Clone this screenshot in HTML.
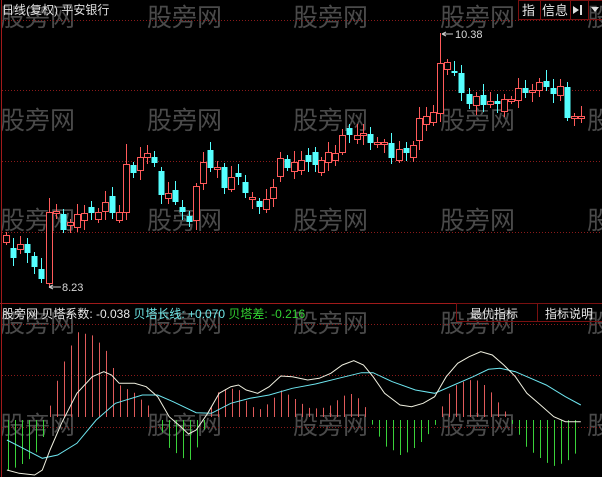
<!DOCTYPE html>
<html><head><meta charset="utf-8"><style>
html,body{margin:0;padding:0;background:#000;}
body{width:602px;height:477px;overflow:hidden;position:relative;font-family:"Liberation Sans","Noto Sans CJK SC",sans-serif;}
svg{position:absolute;left:0;top:0;}
.t{font-family:"Liberation Sans","Noto Sans CJK SC",sans-serif;}
</style></head><body>
<svg id="s" width="602" height="477" viewBox="0 0 602 477">
<g fill="#4a4a4a" font-size="25" class="t" id="wm"></g>
<g stroke="#8a1a1a" stroke-dasharray="1,2" stroke-width="1">
<line x1="2" y1="20.5" x2="602" y2="20.5"/>
<line x1="2" y1="90.5" x2="602" y2="90.5"/>
<line x1="2" y1="161.5" x2="602" y2="161.5"/>
<line x1="2" y1="232.5" x2="602" y2="232.5"/>
<line x1="2" y1="324.5" x2="602" y2="324.5"/>
<line x1="2" y1="375.5" x2="602" y2="375.5"/>
<line x1="2" y1="427.5" x2="602" y2="427.5"/>
</g>
<line x1="1.5" y1="0" x2="1.5" y2="477" stroke="#a01a1a"/>
<line x1="0" y1="303.5" x2="602" y2="303.5" stroke="#a01a1a"/>
<g id="c"></g>
<g id="h"></g>
<g id="l" fill="none"></g>
<text x="2" y="14" fill="#e0e0e0" font-size="12" class="t">日线(复权) 平安银行</text>
<g stroke="#7a1010" fill="none">
<rect x="518.5" y="0.5" width="22" height="19"/>
<rect x="540.5" y="0.5" width="30" height="19"/>
<rect x="570.5" y="0.5" width="18" height="19"/>
<rect x="588.5" y="0.5" width="14" height="19"/>
<rect x="456.5" y="303.5" width="81" height="18"/>
<rect x="537.5" y="303.5" width="66" height="18"/>
</g>
<text x="522" y="15" fill="#e8e8e8" font-size="13" class="t">指</text>
<text x="542" y="15" fill="#e8e8e8" font-size="13" class="t">信息</text>
<path d="M573 6 L579 10 L573 14 Z" fill="#ddd"/><rect x="573" y="9" width="2" height="2" fill="#ddd"/><rect x="580" y="5" width="2" height="10" fill="#ddd"/>
<path d="M591 7 L599 7 L595 12 Z" fill="#ddd"/>
<text x="470" y="318" fill="#e8e8e8" font-size="12" class="t">最优指标</text>
<text x="545" y="318" fill="#e8e8e8" font-size="12" class="t">指标说明</text>
<text x="2" y="318" font-size="12" class="t"><tspan fill="#e8e8e8">股旁网 贝塔系数: -0.038 </tspan><tspan fill="#6ee6e6">贝塔长线: +0.070 </tspan><tspan fill="#32d232">贝塔差: -0.216</tspan></text>
<line x1="442" y1="34" x2="453" y2="34" stroke="#ccc"/><path d="M442 34 L446 32 M442 34 L446 36" stroke="#ccc"/>
<text x="455" y="38" fill="#d8d8d8" font-size="11" class="t">10.38</text>
<line x1="49" y1="287" x2="61" y2="287" stroke="#ccc"/><path d="M49 287 L53 285 M49 287 L53 289" stroke="#ccc"/>
<text x="62" y="291" fill="#d8d8d8" font-size="11" class="t">8.23</text>
</svg>
<script>
var NS="http://www.w3.org/2000/svg";
function el(p,n,a){var e=document.createElementNS(NS,n);for(var k in a)e.setAttribute(k,a[k]);p.appendChild(e);return e;}
var wm=document.getElementById('wm');
[12,115,215,318,420].forEach(function(y){[0,147,293,440,587].forEach(function(x){var t=el(wm,'text',{x:x,y:y+14});t.textContent='股旁网';});});
// x, top, bottom, up(red)
var C=[[6,235,242,1],[13,248,258,0],[20,244,249,1],[27,244,253,0],[34,256,267,0],[41,269,279,0],[49,212,283,1],[56,211,213,1],[63,214,230,0],[70,222,225,1],[77,214,227,1],[84,213,220,1],[91,207,213,0],[98,212,219,1],[105,202,211,1],[112,196,213,0],[119,212,220,1],[126,164,212,1],[133,165,173,0],[140,157,170,1],[147,153,157,1],[154,157,163,0],[161,171,195,0],[168,193,198,1],[175,190,202,0],[182,207,212,0],[189,216,222,0],[196,186,220,1],[203,162,183,1],[210,150,168,0],[217,167,169,1],[224,167,188,0],[231,177,189,1],[238,173,177,0],[245,182,193,0],[252,197,199,1],[259,201,207,0],[266,199,209,1],[273,187,198,1],[280,158,176,1],[287,159,168,0],[294,162,171,1],[301,160,170,1],[308,155,162,0],[315,152,165,0],[321,160,172,1],[328,152,162,1],[335,153,160,1],[342,135,152,1],[349,128,135,0],[357,135,139,1],[363,133,135,1],[370,134,143,0],[377,142,144,1],[384,142,144,1],[391,143,158,0],[399,149,160,1],[406,148,153,0],[413,145,157,1],[419,118,140,1],[426,116,124,1],[433,112,122,1],[440,63,113,1],[447,62,69,1],[454,71,73,0],[461,73,93,0],[469,94,104,0],[476,96,105,1],[483,95,105,0],[490,101,104,1],[497,101,104,0],[504,99,111,1],[511,99,101,1],[518,88,100,1],[525,88,93,0],[532,90,92,1],[539,82,90,1],[546,81,87,0],[553,88,94,0],[560,86,95,1],[567,87,118,0],[574,116,118,1],[581,116,118,1]];
var cg=document.getElementById('c');
C.forEach(function(c,i){var w1=3+((i*7)%9),w2=3+((i*5)%8);var hi=c[1]-w1,lo=c[2]+w2;
if(c[0]==49){hi=198;lo=288;} if(c[0]==440){hi=33;} if(c[0]==126){hi=144;}
var col=c[3]?'#ff5a5a':'#55ffff';
el(cg,'line',{x1:c[0]+.5,y1:hi,x2:c[0]+.5,y2:lo,stroke:col});
if(c[3]){el(cg,'rect',{x:c[0]-2.5,y:c[1]+.5,width:6,height:Math.max(c[2]-c[1],1),fill:'#000',stroke:col});}
else el(cg,'rect',{x:c[0]-2.5,y:c[1],width:6,height:Math.max(c[2]-c[1],1.5),fill:col});});
function cv(a){return a.map(function(p){return [p[0]/2.6,290+p[1]/3];});}
var W=cv([[18,540],[50,550],[90,555],[110,540],[130,480],[160,400],[200,310],[240,260],[270,245],[290,255],[310,280],[350,280],[380,290],[410,320],[440,380],[470,410],[490,432],[510,420],[540,370],[570,310],[600,290],[620,285],[640,300],[670,310],[700,290],[730,258],[760,260],[800,270],[830,265],[860,250],[890,225],[920,212],[945,225],[970,260],[1000,310],[1040,345],[1070,350],[1100,340],[1130,320],[1160,260],[1190,220],[1220,200],[1250,185],[1280,195],[1310,225],[1340,260],[1370,310],[1400,340],[1440,380],[1470,395],[1510,395]]);
var Cy=cv([[18,450],[60,475],[110,505],[150,495],[200,460],[250,390],[300,340],[370,315],[410,315],[450,335],[510,368],[550,370],[600,340],[650,325],[700,315],[760,295],[820,282],[880,265],[940,248],[970,248],[1020,275],[1080,300],[1130,310],[1180,285],[1230,260],[1270,238],[1300,235],[1340,245],[1420,285],[1470,320],[1510,345]]);
function it(a,x){for(var i=0;i<a.length-1;i++){if(x>=a[i][0]&&x<=a[i+1][0]){var t=(x-a[i][0])/(a[i+1][0]-a[i][0]);return a[i][1]+t*(a[i+1][1]-a[i][1]);}}return a[a.length-1][1];}
var hg=document.getElementById('h');var base=417;
for(var x=8;x<=581;x+=7){var d=it(Cy,x)-it(W,x);var len=d*1.7;if(Math.abs(len)<2)continue;
if(len>0)el(hg,'line',{x1:x+.5,y1:base-len,x2:x+.5,y2:base,stroke:'#e05a5a'});
else el(hg,'line',{x1:x+.5,y1:base+3,x2:x+.5,y2:base+3-len,stroke:'#3ad23a'});}
var lg=document.getElementById('l');
function pl(a){return a.map(function(p){return p[0].toFixed(1)+','+p[1].toFixed(1);}).join(' ');}
el(lg,'polyline',{points:pl(Cy),stroke:'#6ee6f0'});
el(lg,'polyline',{points:pl(W),stroke:'#f0f0e0'});
</script>
</body></html>
